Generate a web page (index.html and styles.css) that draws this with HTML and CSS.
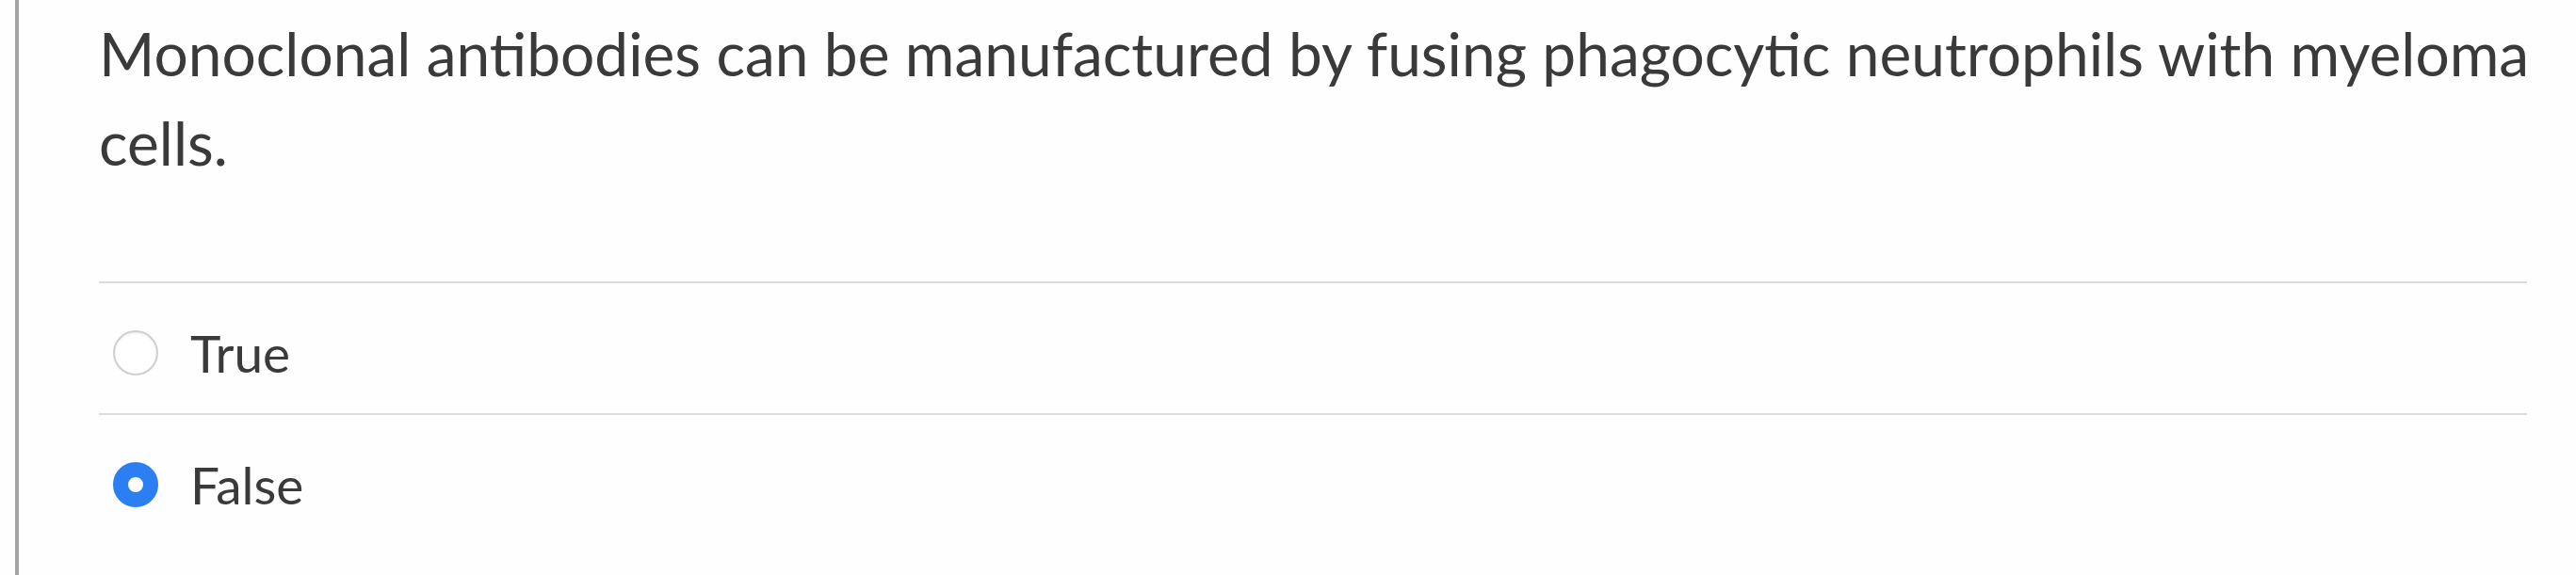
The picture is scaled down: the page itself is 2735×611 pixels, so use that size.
FILE: index.html
```html
<!DOCTYPE html>
<html lang="en">
<head>
<meta charset="utf-8">
<title>Question</title>
<link rel="stylesheet" href="styles.css">
</head>
<body>
<div class="question">
  <div class="question-text">Monoclonal antibodies can be manufactured by fusing phagocytic neutrophils with myeloma cells.</div>
  <div class="answers">
    <label class="answer">
      <span class="radio"></span>
      <span class="answer-label">True</span>
    </label>
    <label class="answer">
      <span class="radio checked"></span>
      <span class="answer-label">False</span>
    </label>
  </div>
</div>
</body>
</html>
```
FILE: styles.css
```css
html, body {
  margin: 0;
  padding: 0;
  background: #fefefe;
}
body {
  font-family: Lato, "Noto Sans", sans-serif;
  color: #3a3a3a;
}
.question {
  margin-left: 16px;
  border-left: 4px solid #a4a4a4;
  height: 611px;
  box-sizing: border-box;
  padding: 0 52px 0 85px;
}
.question-text {
  font-size: 64px;
  line-height: 95px;
  padding-top: 9px;
  padding-bottom: 100px;
  width: 2600px;
}
.answers {
  border-top: 2px solid #dcdcdc;
}
.answer {
  display: flex;
  align-items: center;
  height: 138px;
  box-sizing: border-box;
  padding-top: 10px;
  padding-left: 15px;
  gap: 34px;
  font-size: 55px;
}
.answer + .answer {
  border-top: 2px solid #dcdcdc;
  height: 140px;
}
.radio {
  width: 48px;
  height: 48px;
  box-sizing: border-box;
  border-radius: 50%;
  border: 2px solid #cfcfcf;
  background: #fff;
  box-shadow: inset 0 1px 2px rgba(0,0,0,0.08);
  flex: none;
}
.radio.checked {
  border: 16px solid #2b7ff2;
  background: #fff;
  box-shadow: none;
}
.answer-label {
  line-height: 1;
}
```
